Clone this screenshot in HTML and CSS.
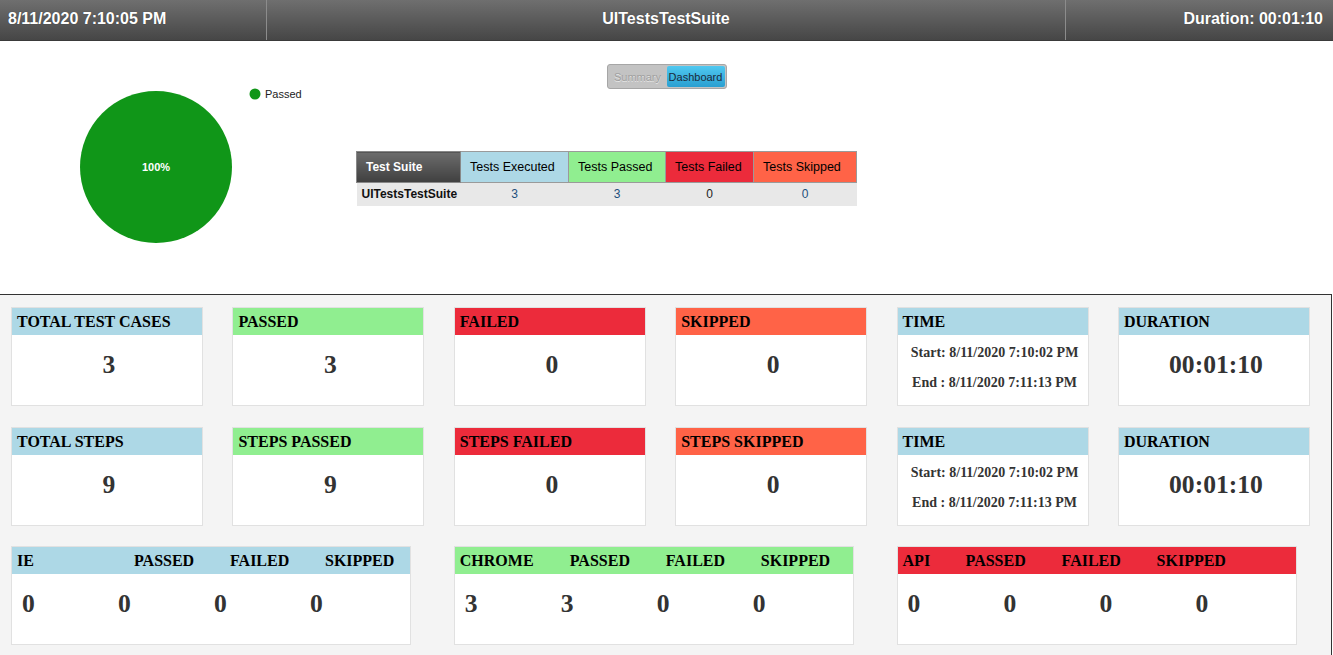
FILE: index.html
```html
<!DOCTYPE html>
<html lang="en">
<head>
<meta charset="utf-8">
<title>UITestsTestSuite</title>
<link rel="stylesheet" href="styles.css">
</head>
<body>
<header class="topbar">
  <div class="tb-cell tb-left">8/11/2020 7:10:05 PM</div>
  <div class="tb-cell tb-mid">UITestsTestSuite</div>
  <div class="tb-cell tb-right">Duration: 00:01:10</div>
</header>

<section class="overview">
  <div class="chart">
    <svg width="346" height="253" viewBox="0 0 346 253">
      <circle cx="156" cy="126" r="76" fill="#109618"/>
      <text x="156" y="130" text-anchor="middle" class="pie-label">100%</text>
      <circle cx="255" cy="53" r="5.5" fill="#109618"/>
      <text x="265" y="57" class="legend-label">Passed</text>
    </svg>
  </div>
  <div class="toggle">
    <span class="tg-off">Summary</span>
    <span class="tg-on">Dashboard</span>
  </div>
  <table class="suite">
    <thead>
      <tr>
        <th class="c-suite">Test Suite</th>
        <th class="c-exec">Tests Executed</th>
        <th class="c-pass">Tests Passed</th>
        <th class="c-fail">Tests Failed</th>
        <th class="c-skip">Tests Skipped</th>
      </tr>
    </thead>
    <tbody>
      <tr>
        <td class="name">UITestsTestSuite</td>
        <td class="link">3</td>
        <td class="link">3</td>
        <td class="plain">0</td>
        <td class="link">0</td>
      </tr>
    </tbody>
  </table>
</section>

<section class="dash">
  <div class="grid">
    <div class="card"><div class="card-h blue">TOTAL TEST CASES</div><div class="card-b"><div class="num">3</div></div></div>
    <div class="card"><div class="card-h green">PASSED</div><div class="card-b"><div class="num">3</div></div></div>
    <div class="card"><div class="card-h red">FAILED</div><div class="card-b"><div class="num">0</div></div></div>
    <div class="card"><div class="card-h tomato">SKIPPED</div><div class="card-b"><div class="num">0</div></div></div>
    <div class="card"><div class="card-h blue">TIME</div><div class="card-b time"><div class="tl">Start: 8/11/2020 7:10:02 PM</div><div class="tl">End : 8/11/2020 7:11:13 PM</div></div></div>
    <div class="card"><div class="card-h blue">DURATION</div><div class="card-b"><div class="num">00:01:10</div></div></div>

    <div class="card"><div class="card-h blue">TOTAL STEPS</div><div class="card-b"><div class="num">9</div></div></div>
    <div class="card"><div class="card-h green">STEPS PASSED</div><div class="card-b"><div class="num">9</div></div></div>
    <div class="card"><div class="card-h red">STEPS FAILED</div><div class="card-b"><div class="num">0</div></div></div>
    <div class="card"><div class="card-h tomato">STEPS SKIPPED</div><div class="card-b"><div class="num">0</div></div></div>
    <div class="card"><div class="card-h blue">TIME</div><div class="card-b time"><div class="tl">Start: 8/11/2020 7:10:02 PM</div><div class="tl">End : 8/11/2020 7:11:13 PM</div></div></div>
    <div class="card"><div class="card-h blue">DURATION</div><div class="card-b"><div class="num">00:01:10</div></div></div>

    <div class="card wide">
      <div class="card-h blue row-h"><span class="lbl lbl-ie">IE</span><span class="lbl lbl-p">PASSED</span><span class="lbl lbl-f">FAILED</span><span class="lbl">SKIPPED</span></div>
      <div class="card-b row-b"><span class="v">0</span><span class="v">0</span><span class="v">0</span><span class="v">0</span></div>
    </div>
    <div class="card wide">
      <div class="card-h green row-h"><span class="lbl lbl-ch">CHROME</span><span class="lbl lbl-p">PASSED</span><span class="lbl lbl-f">FAILED</span><span class="lbl">SKIPPED</span></div>
      <div class="card-b row-b"><span class="v">3</span><span class="v">3</span><span class="v">0</span><span class="v">0</span></div>
    </div>
    <div class="card wide">
      <div class="card-h red row-h"><span class="lbl lbl-api">API</span><span class="lbl lbl-p">PASSED</span><span class="lbl lbl-f">FAILED</span><span class="lbl">SKIPPED</span></div>
      <div class="card-b row-b"><span class="v">0</span><span class="v">0</span><span class="v">0</span><span class="v">0</span></div>
    </div>
  </div>
</section>
</body>
</html>
```

FILE: styles.css
```css
* { box-sizing: border-box; }

html, body {
  margin: 0;
  padding: 0;
  background: #ffffff;
  font-family: "Liberation Sans", Arial, sans-serif;
}

/* ---------- top bar ---------- */
.topbar {
  display: grid;
  grid-template-columns: 266px 799px 1fr;
  height: 41px;
  background: linear-gradient(#6f6f6f, #464646);
  border-bottom: 1px solid #3a3a3a;
  color: #ffffff;
  font-weight: bold;
  font-size: 16px;
}
.tb-cell {
  line-height: 38px;
  white-space: nowrap;
  text-shadow: 0 0 1px rgba(0,0,0,0.4);
}
.tb-left { padding-left: 8px; }
.tb-mid { text-align: center; border-left: 1px solid #8c8c8c; }
.tb-right { text-align: right; padding-right: 10px; border-left: 1px solid #8c8c8c; }

/* ---------- overview ---------- */
.overview {
  display: grid;
  grid-template-columns: 346px 1fr;
  grid-template-rows: auto 1fr;
  height: 253px;
}
.chart {
  grid-column: 1;
  grid-row: 1 / 3;
}
.chart svg { display: block; }
.pie-label {
  font-family: "Liberation Sans", Arial, sans-serif;
  font-weight: bold;
  font-size: 11px;
  fill: #ffffff;
}
.legend-label {
  font-family: "Liberation Sans", Arial, sans-serif;
  font-size: 11px;
  fill: #222222;
}

.toggle {
  grid-column: 1 / 3;
  grid-row: 1;
  justify-self: center;
  margin-top: 23px;
  width: 120px;
  height: 25px;
  display: flex;
  align-items: stretch;
  padding: 1px;
  background: #c3c3c3;
  border: 1px solid #a6a6a6;
  border-radius: 3px;
  font-size: 11px;
  position: relative;
  z-index: 1;
}
.tg-off {
  width: 58px;
  display: flex;
  align-items: center;
  justify-content: center;
  color: #a0a0a0;
  text-shadow: 0 1px 0 #e6e6e6;
}
.tg-on {
  flex: 1;
  display: flex;
  align-items: center;
  justify-content: center;
  color: #1b2a3a;
  background: linear-gradient(#4fc8f0, #2a9fd1);
  border-radius: 2px;
}

.suite {
  grid-column: 2;
  grid-row: 2;
  align-self: start;
  margin: 62px 0 0 10px;
  border-collapse: collapse;
  font-size: 12.5px;
  width: 500px;
  table-layout: fixed;
}
.suite th {
  height: 31px;
  padding: 0 0 0 9px;
  text-align: left;
  font-weight: normal;
  color: #000000;
  border: 1px solid #9a9a9a;
  white-space: nowrap;
}
.suite .c-suite {
  width: 104px;
  color: #ffffff;
  font-weight: bold;
  font-size: 12px;
  background: linear-gradient(#6c6c6c, #3f3f3f);
  border-color: #888888;
}
.suite .c-exec { width: 108px; background: #add8e6; }
.suite .c-pass { width: 97px; background: #90ee90; }
.suite .c-fail { width: 88px; background: #ec2b3b; }
.suite .c-skip { width: 103px; background: #ff6347; }

.suite td {
  height: 23px;
  background: #e8e8e8;
  text-align: center;
  font-size: 12px;
  padding: 0;
}
.suite td.name {
  text-align: left;
  padding-left: 5px;
  font-weight: bold;
  color: #111111;
}
.suite td.link { color: #1d4f7c; }
.suite td.plain { color: #222222; }

/* ---------- dashboard ---------- */
.dash {
  background: #f4f4f4;
  border-top: 1px solid #333333;
  border-right: 1px solid #333333;
  margin-right: 1px;
  padding: 12px 0 20px 11px;
  font-family: "Liberation Serif", "Times New Roman", serif;
}
.grid {
  display: grid;
  grid-template-columns: repeat(6, 221.4px);
  row-gap: 20.5px;
}
.card {
  width: 192px;
  height: 99px;
  background: #ffffff;
  border: 1px solid #e1e1e1;
}
.card.wide {
  grid-column: span 2;
  width: 400px;
}
.card-h {
  height: 27px;
  line-height: 27px;
  padding: 0 5px;
  font-weight: bold;
  font-size: 16px;
  color: #000000;
  white-space: nowrap;
}
.blue { background: #add8e6; }
.green { background: #90ee90; }
.red { background: #ec2b3b; }
.tomato { background: #ff6347; }

.card-b {
  height: 70px;
  padding: 12px 0 0 4px;
}
.num {
  text-align: center;
  font-weight: bold;
  font-size: 25.6px;
  line-height: 36px;
  color: #333333;
}
.card-b.time { padding-top: 3px; }
.tl {
  text-align: center;
  font-weight: bold;
  font-size: 14px;
  line-height: 30px;
  color: #333333;
  white-space: nowrap;
}

.row-h { display: flex; }
.lbl { display: inline-block; }
.lbl-ie { width: 117px; }
.lbl-ch { width: 110px; }
.lbl-api { width: 63px; }
.lbl-p { width: 96px; }
.lbl-f { width: 95px; }

.card-b.row-b {
  display: flex;
  padding-left: 10px;
}
.v {
  width: 96px;
  font-weight: bold;
  font-size: 25.6px;
  line-height: 36px;
  color: #333333;
}
```
